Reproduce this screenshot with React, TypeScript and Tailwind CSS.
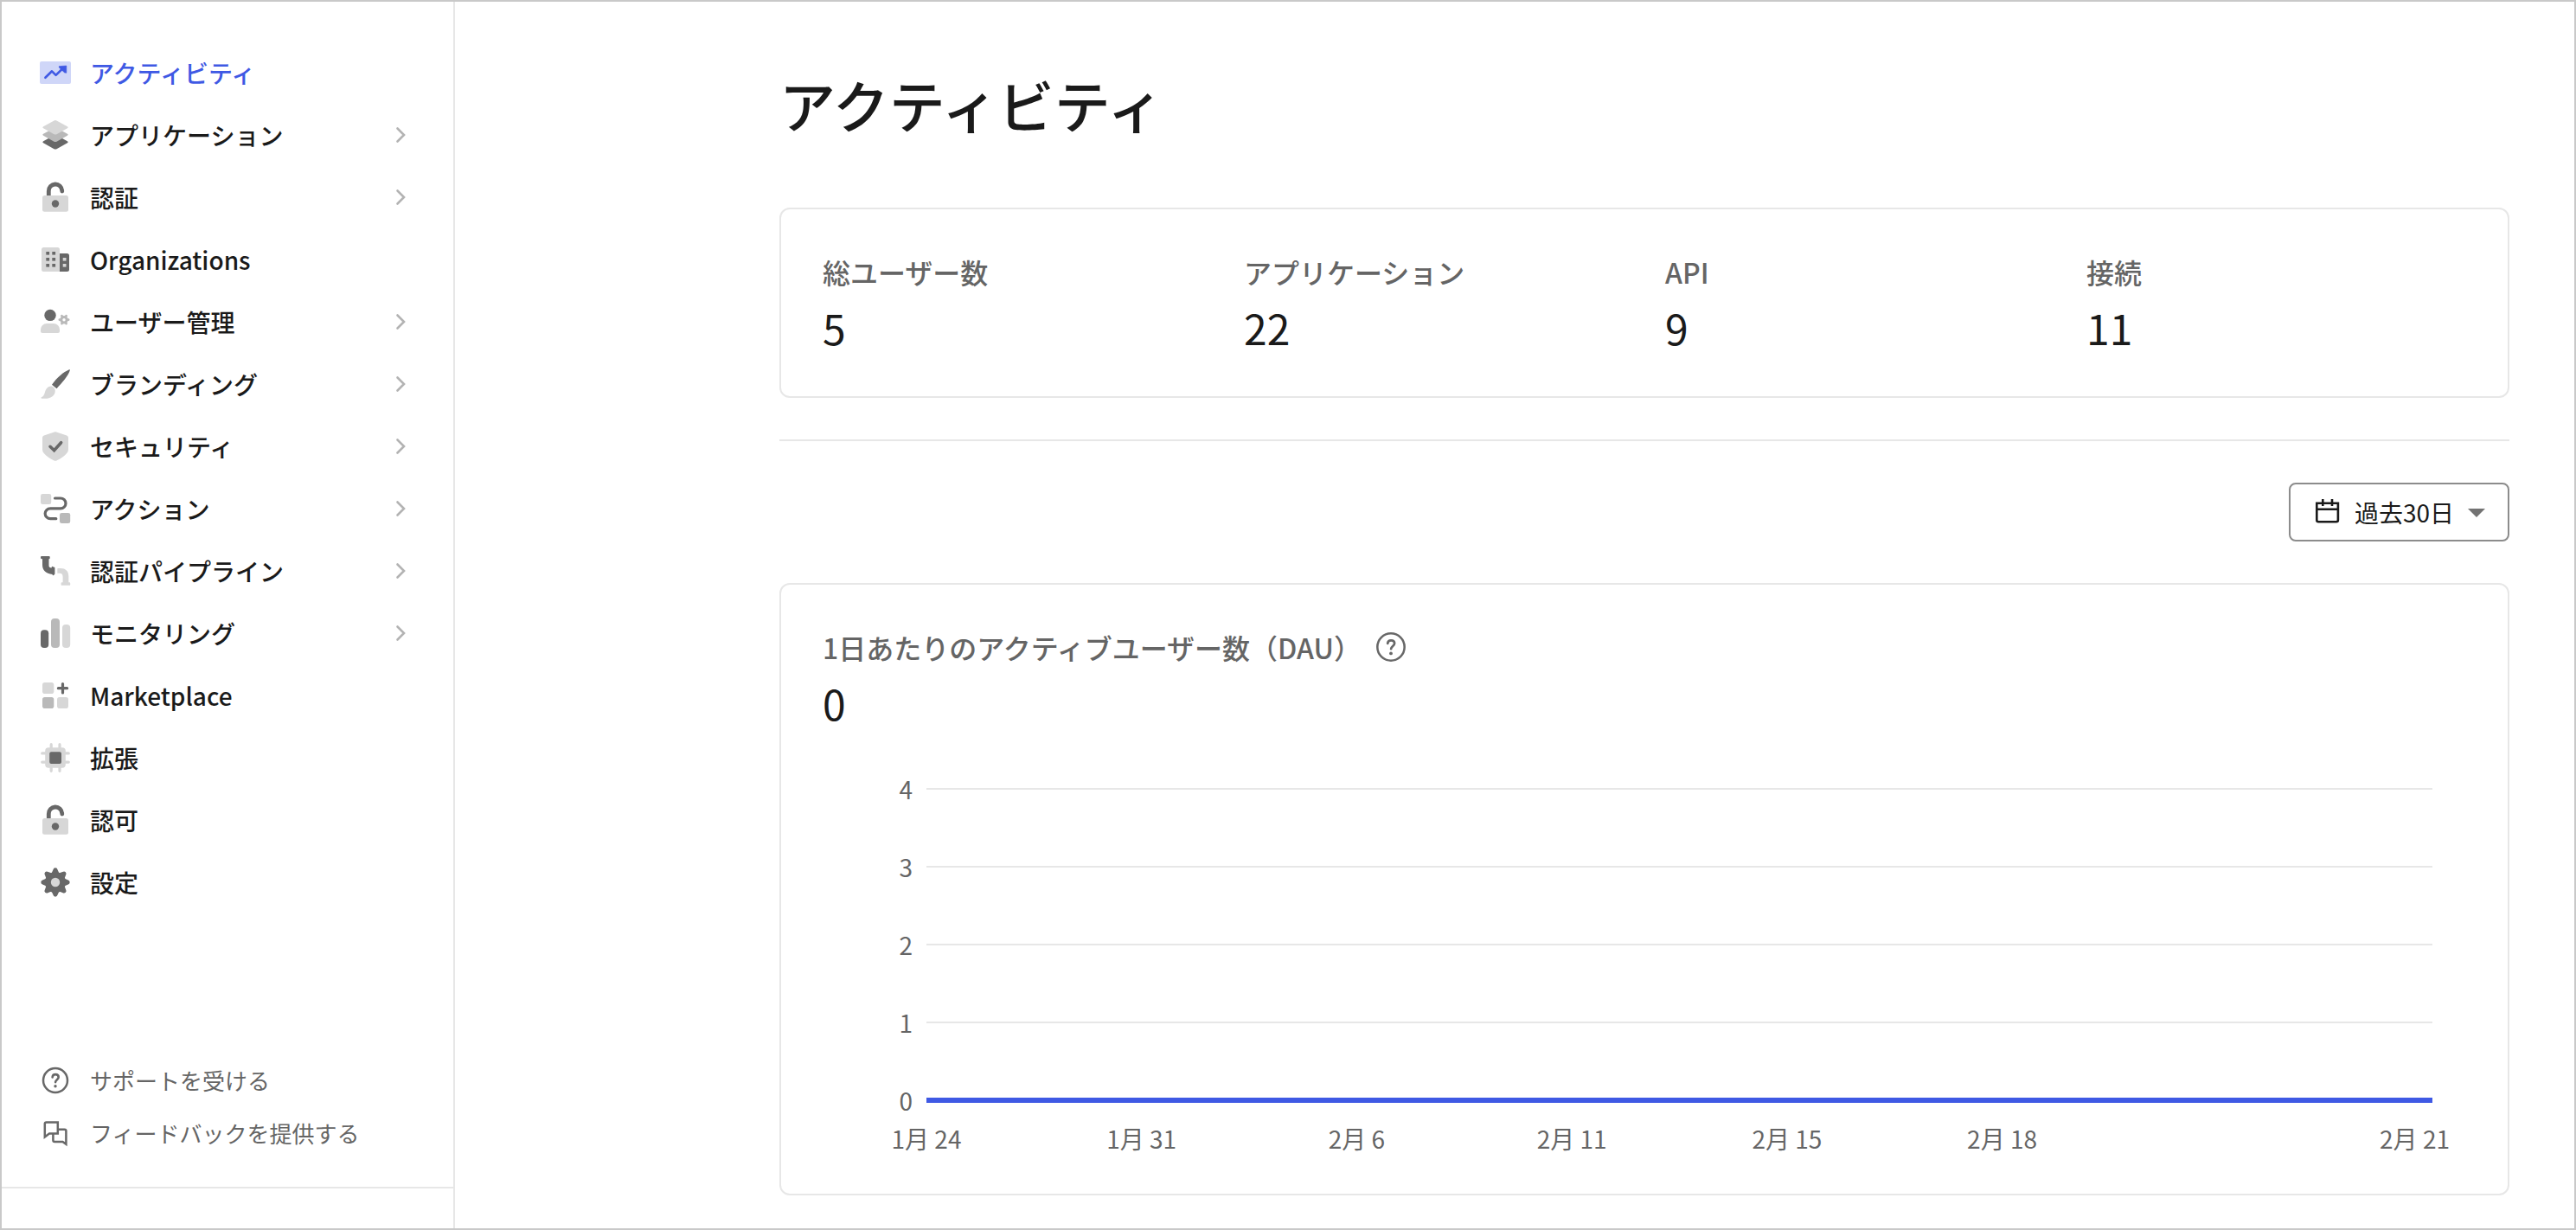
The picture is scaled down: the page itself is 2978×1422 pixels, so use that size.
import { useState } from "react";
import type { ReactNode } from "react";

const DARK = "#686868";
const MID = "#b9b9b9";
const LIGHT = "#d7d7d7";

function Icon({ children }: { children: ReactNode }) {
  return (
    <svg viewBox="0 0 40 40" fill="none" aria-hidden="true" className="size-10 shrink-0">
      {children}
    </svg>
  );
}

const ActivityIcon = () => (
  <Icon>
    <rect x="2" y="7" width="36" height="26" rx="2" fill="#cfd6f8" />
    <path d="M8.4 25.8 16 18.3l4.6 4.6 8.6-8.4" stroke="#3f59e4" strokeWidth="2.6" strokeLinecap="round" strokeLinejoin="round" />
    <path d="M24.4 12.6h.9l7.5-.6v8.3l-2.2-.4-6.4-6z" fill="#3f59e4" stroke="#3f59e4" strokeWidth=".6" strokeLinejoin="round" />
  </Icon>
);

const LayersIcon = () => (
  <Icon>
    <path d="M18.5 20.4q1.5-.7 3 0l12.4 6.9q1.8 1 0 2l-12.4 6.9q-1.5.8-3 0L6.1 29.3q-1.8-1 0-2z" fill={DARK} />
    <path d="M18.5 11.9q1.5-.7 3 0l12.4 6.9q1.8 1 0 2l-12.4 6.9q-1.5.8-3 0L6.1 20.8q-1.8-1 0-2z" fill={MID} />
    <path d="M18.5 3.4q1.5-.7 3 0l12.4 6.9q1.8 1 0 2l-12.4 6.9q-1.5.8-3 0L6.1 12.3q-1.8-1 0-2z" fill={LIGHT} />
  </Icon>
);

const LockIcon = () => (
  <Icon>
    <rect x="5" y="18" width="30" height="18.7" rx="2.5" fill={LIGHT} />
    <path d="M12.3 18v-5a7.7 7.7 0 0 1 15.4-.6" stroke={DARK} strokeWidth="4.8" />
    <circle cx="27.8" cy="13" r="2.4" fill={DARK} />
    <circle cx="20" cy="27.5" r="4.2" fill={DARK} />
  </Icon>
);

const BuildingIcon = () => (
  <Icon>
    <path d="M25 34H6.5A2.5 2.5 0 0 1 4 31.5v-23A2.5 2.5 0 0 1 6.5 6h16A2.5 2.5 0 0 1 25 8.5z" fill={LIGHT} />
    <path d="M25 13h8.5a2.5 2.5 0 0 1 2.5 2.5v16a2.5 2.5 0 0 1-2.5 2.5H25z" fill={DARK} />
    {[11, 18, 25].map((y) => (
      <g key={y} fill={DARK}>
        <rect x="9.3" y={y} width="3.8" height="3.6" />
        <rect x="16.3" y={y} width="3.8" height="3.6" />
      </g>
    ))}
    <rect x="28.7" y="18" width="3.8" height="3.6" fill={LIGHT} />
    <rect x="28.7" y="25" width="3.8" height="3.6" fill={LIGHT} />
  </Icon>
);

const UserIcon = () => (
  <Icon>
    <circle cx="14" cy="12.4" r="6.7" fill={DARK} />
    <path d="M3 31v-2a7 7 0 0 1 7-7h8a7 7 0 0 1 7 7v2a2 2 0 0 1-2 2H5a2 2 0 0 1-2-2z" fill={LIGHT} />
    <circle cx="30" cy="17.7" r="3.2" stroke={MID} strokeWidth="3" />
    {[30, 90, 150, 210, 270, 330].map((deg) => (
      <path key={deg} d="M30 13.9v-1.3" transform={`rotate(${deg} 30 17.7)`} stroke={MID} strokeWidth="2.8" strokeLinecap="round" />
    ))}
  </Icon>
);

const BrushIcon = () => (
  <Icon>
    <path d="M16 20.8C22 12 29.5 6 35.6 3.4c1.2-.4 1.5.1 1.1 1.2C34.500 11 28 18.5 21.5 25.2z" fill={DARK} />
    <path d="M14.8 22.6c2.6 0 5 2.4 5 5.4 0 5.6-5.6 8.8-11.6 8.8-2 0-3.6-.1-4.4-.4-.6-.3-.4-.8.2-1.1 1.8-.9 2.8-2.5 3.8-5.4 1.4-4.4 3.6-7.2 7-7.3z" fill={LIGHT} />
  </Icon>
);

const ShieldIcon = () => (
  <Icon>
    <path d="M18.8 3.4q1.2-.5 2.4 0l12 4.1q1.8.7 1.8 2.5v13.5q0 2.5-1.6 4.3c-3.2 3.7-7.3 6.7-12 8.6q-1.400.5-2.8 0c-4.7-1.9-8.8-4.9-12-8.6Q5 26 5 23.500V10q0-1.8 1.8-2.5z" fill={LIGHT} />
    <path d="m14 20.3 4.6 4.4 8-9" stroke={DARK} strokeWidth="3.6" strokeLinecap="round" />
  </Icon>
);

const FlowIcon = () => (
  <Icon>
    <rect x="3" y="3" width="12.2" height="12" rx="2.3" fill={LIGHT} />
    <rect x="25" y="25" width="12.2" height="12" rx="2.3" fill={MID} />
    <path d="M19.5 8H26a6 5.9 0 0 1 0 11.8H14.2a6 5.9 0 0 0 0 11.9h6.6" stroke={DARK} strokeWidth="3.2" strokeLinecap="round" />
  </Icon>
);

const PipeIcon = () => (
  <Icon>
    <path d="M4 3h8.7q1 0 1 1v1.3q0 1-1.2 1V14q0 2.4 3.1 2.4V16q0-1 1-1.3l.6.6q2.2.3 2.2 1v7q0 1-.9 1.2l-.6.8q-1.4 0-1.4-1.4C9 23 5 19.500 5 13V6.3q-2 0-2-1V4q0-1 1-1z" fill={DARK} />
    <path d="M22.3 17.4q0-.4.6-.4H26c6 0 9.3 3.4 9.3 9.3v7h1q.9 0 .9 1v1.6q0 .9-.9.9h-8.7q-1 0-1-.9v-1.6q0-1 1-1h1V27q0-4.2-3.6-4.2h-2.1q-.6 0-.6-.4z" fill={LIGHT} />
  </Icon>
);

const BarsIcon = () => (
  <Icon>
    <rect x="3" y="16.3" width="9.2" height="20.7" rx="4" fill={DARK} />
    <rect x="15" y="3" width="10" height="34" rx="4" fill={MID} />
    <rect x="28" y="10" width="9.2" height="27" rx="4" fill={LIGHT} />
  </Icon>
);

const MarketIcon = () => (
  <Icon>
    <rect x="5" y="5" width="13.3" height="13" rx="2.8" fill={LIGHT} />
    <rect x="5" y="22" width="13.3" height="13" rx="2.8" fill={MID} />
    <rect x="22" y="22" width="13" height="13" rx="2.8" fill={LIGHT} />
    <path d="M28.5 6.5v10.4M23.4 11.7h10.2" stroke={DARK} strokeWidth="3.2" strokeLinecap="round" />
  </Icon>
);

const ChipIcon = () => (
  <Icon>
    <path d="M15.2 4.7v30.6M25 4.7v30.6M4.7 14.9h30.6M4.7 25.1h30.6" stroke={LIGHT} strokeWidth="3.2" strokeLinecap="round" />
    <rect x="8.2" y="8.2" width="23.6" height="23.6" rx="4" fill={LIGHT} />
    <rect x="13.2" y="13.2" width="13.8" height="13.8" rx="2" fill={DARK} />
  </Icon>
);

const GearIcon = () => (
  <Icon>
    <circle cx="20" cy="20" r="12" fill={DARK} />
    {[0, 45, 90, 135, 180, 225, 270, 315].map((deg) => (
      <path key={deg} d="M15 11l2.3-5.3q.6-2.4 2.7-2.4t2.7 2.4L25 11z" transform={`rotate(${deg} 20 20)`} fill={DARK} />
    ))}
    <circle cx="20" cy="20" r="5.2" fill={LIGHT} />
  </Icon>
);

const HelpIcon = () => (
  <Icon>
    <circle cx="20" cy="20" r="14" stroke={DARK} strokeWidth="2.5" />
    <path d="M16.6 16.4c.2-2.1 1.6-3.3 3.5-3.3 2.1 0 3.6 1.3 3.6 3.2 0 2.7-3.6 3-3.6 5.8" stroke={DARK} strokeWidth="2.6" strokeLinecap="round" />
    <circle cx="20" cy="26.8" r="1.7" fill={DARK} />
  </Icon>
);

const FeedbackIcon = () => (
  <Icon>
    <path d="M7.8 24.5V9.3q0-1.8 1.8-1.8h13.2V20.600H13zM22.8 15.800h7.8q1.8 0 1.8 1.8v15.2L28.500 30H19.2q-1.8 0-1.8-1.8v-7.6" stroke={DARK} strokeWidth="2.5" />
  </Icon>
);

const menu = [
  { label: "アクティビティ", icon: <ActivityIcon />, active: true },
  { label: "アプリケーション", icon: <LayersIcon />, children: true },
  { label: "認証", icon: <LockIcon />, children: true },
  { label: "Organizations", icon: <BuildingIcon /> },
  { label: "ユーザー管理", icon: <UserIcon />, children: true },
  { label: "ブランディング", icon: <BrushIcon />, children: true },
  { label: "セキュリティ", icon: <ShieldIcon />, children: true },
  { label: "アクション", icon: <FlowIcon />, children: true },
  { label: "認証パイプライン", icon: <PipeIcon />, children: true },
  { label: "モニタリング", icon: <BarsIcon />, children: true },
  { label: "Marketplace", icon: <MarketIcon /> },
  { label: "拡張", icon: <ChipIcon /> },
  { label: "認可", icon: <LockIcon /> },
  { label: "設定", icon: <GearIcon /> },
];

const stats = [
  { label: "総ユーザー数", value: 5 },
  { label: "アプリケーション", value: 22 },
  { label: "API", value: 9 },
  { label: "接続", value: 11 },
];

const dates = ["1月 24", "1月 31", "2月 6", "2月 11", "2月 15", "2月 18"];

function Sidebar() {
  return (
    <aside className="flex w-[524px] shrink-0 flex-col border-r-2 border-[#e7e7e7]">
      <nav className="pt-[46px]">
        {menu.map((item) => (
          <a
            key={item.label}
            href="#"
            className={`flex h-[72px] items-center gap-5 pl-[42px] pr-12 text-[28px] font-medium ${
              item.active ? "text-[#3f59e4]" : "text-[#1a1a1a]"
            }`}
          >
            {item.icon}
            <span className="flex-1">{item.label}</span>
            {item.children && (
              <svg viewBox="0 0 26 26" fill="none" aria-hidden="true" className="size-[26px]">
                <path d="m9.500 5.500 7.500 7.500-7.500 7.500" stroke="#b3b3b3" strokeWidth="2.6" strokeLinecap="round" />
              </svg>
            )}
          </a>
        ))}
      </nav>
      <div className="mt-auto mb-[46px] border-b-2 border-[#e7e7e7] pb-8 text-[26px] text-[#656565]">
        <a href="#" className="flex h-[61px] items-center gap-5 pl-[42px]">
          <HelpIcon />
          サポートを受ける
        </a>
        <a href="#" className="flex h-[61px] items-center gap-5 pl-[42px]">
          <FeedbackIcon />
          フィードバックを提供する
        </a>
      </div>
    </aside>
  );
}

function RangeSelect() {
  const [range, setRange] = useState("30");

  return (
    <div className="relative">
      <svg viewBox="0 0 28 28" fill="none" aria-hidden="true" className="pointer-events-none absolute left-[31px] top-[19px] size-7">
        <path d="M1.3 4.7h24.600v19.5q0 2-2 2H3.3q-2 0-2-2zM1.3 11.7h24.6M8.3 0v8M19 0v8" stroke="#1a1a1a" strokeWidth="2.6" />
      </svg>
      <select
        aria-label="期間"
        value={range}
        onChange={(e) => setRange(e.target.value)}
        className="h-[68px] appearance-none rounded-lg border-2 border-[#8c8c8c] bg-white pl-[74px] pr-[61px] text-[28px] text-[#1a1a1a]"
      >
        <option value="30">過去30日</option>
      </select>
      <svg viewBox="0 0 20 10" aria-hidden="true" className="pointer-events-none absolute right-7 top-[30px] h-2.5 w-5">
        <path d="M0 0h20L10 10z" fill="#737373" />
      </svg>
    </div>
  );
}

function ActiveUsers() {
  return (
    <section className="rounded-xl border-2 border-[#e7e7e7] p-12">
      <div className="flex items-center gap-4 text-[32px] font-medium leading-[48px] text-[#656565]">
        <h2>1日あたりのアクティブユーザー数（DAU）</h2>
        <button aria-label="ヘルプ">
          <svg viewBox="3 3 34 34" fill="none" aria-hidden="true" className="size-9">
            <circle cx="20" cy="20" r="14.8" stroke={DARK} strokeWidth="2.4" />
            <path d="M16.4 16.2c.2-2.3 1.7-3.5 3.7-3.5 2.2 0 3.8 1.3 3.8 3.4 0 2.8-3.8 3.1-3.8 6" stroke={DARK} strokeWidth="2.6" strokeLinecap="round" />
            <circle cx="20" cy="27" r="1.8" fill={DARK} />
          </svg>
        </button>
      </div>
      <p className="mt-2 text-5xl leading-[64px] text-[#1a1a1a]">0</p>
      {/* Chart */}
      <div className="mt-12 pr-[39px] text-[28px] text-[#656565]">
        <div className="flex flex-col gap-[50px]">
          {[4, 3, 2, 1, 0].map((tick) => (
            <div key={tick} className="flex h-10 items-center gap-4">
              <span className="w-[104px] text-right leading-10">{tick}</span>
              <div className={tick === 0 ? "h-1.5 flex-1 bg-[#3f59e4]" : "h-0.5 flex-1 bg-[#e7e7e7]"} />
            </div>
          ))}
        </div>
        <div className="mt-2 ml-[120px] grid grid-cols-7 leading-8 whitespace-nowrap">
          {dates.map((date) => (
            <span key={date} className="flex w-0 justify-center">
              {date}
            </span>
          ))}
          <span className="-mr-5 text-right">2月 21</span>
        </div>
      </div>
    </section>
  );
}

export default function App() {
  return (
    <div
      lang="ja"
      className="flex min-h-screen border-2 border-[#c9c9c9] bg-white font-['Noto_Sans_CJK_JP','Noto_Sans',sans-serif]"
    >
      <Sidebar />
      <main className="min-w-0 flex-1 pl-12 pr-[75px] pt-[78px]">
        <div className="ml-auto flex max-w-[2000px] flex-col gap-12">
          <h1 className="mb-8 text-[65px] font-medium leading-20 text-[#1a1a1a]">アクティビティ</h1>
          <dl className="grid grid-cols-4 gap-12 rounded-xl border-2 border-[#e7e7e7] p-12">
            {stats.map((stat) => (
              <div key={stat.label}>
                <dt className="text-[32px] font-medium leading-[48px] text-[#656565]">{stat.label}</dt>
                <dd className="mt-2 text-5xl leading-[64px] text-[#1a1a1a]">{stat.value}</dd>
              </div>
            ))}
          </dl>
          <hr className="border-t-2 border-[#e7e7e7]" />
          <div className="flex justify-end">
            <RangeSelect />
          </div>
          <ActiveUsers />
        </div>
      </main>
    </div>
  );
}
